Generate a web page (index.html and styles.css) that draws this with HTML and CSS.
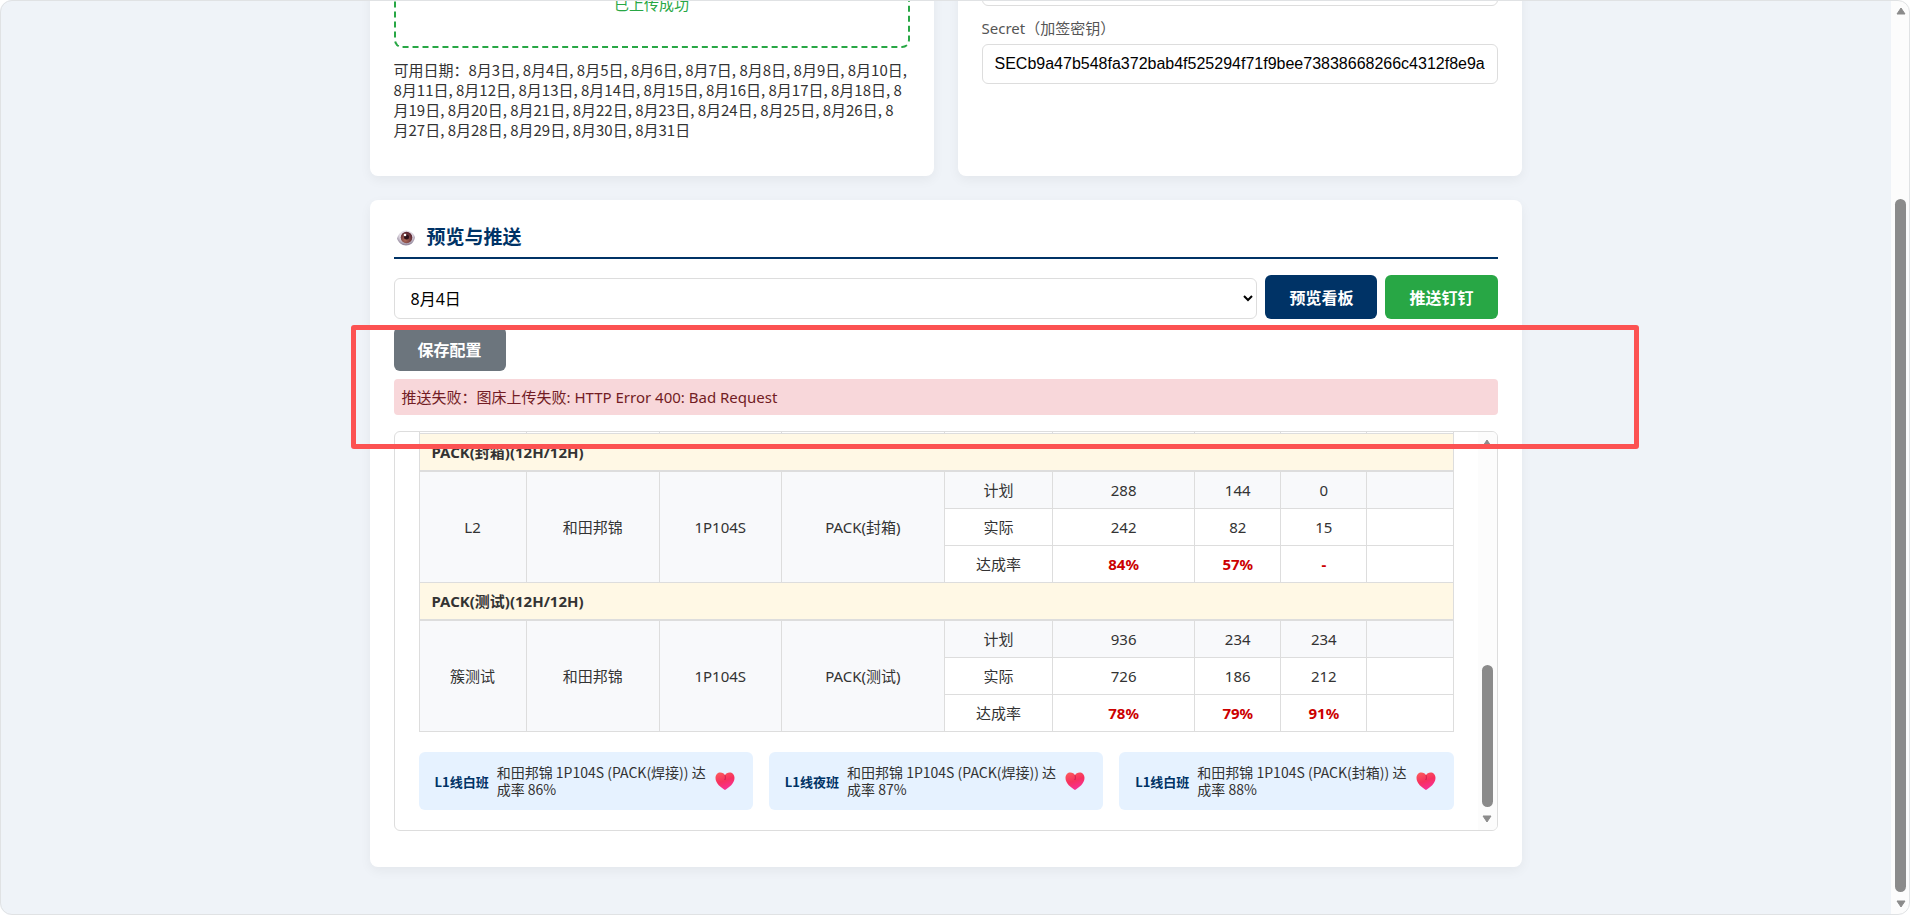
FILE: index.html
```html
<!DOCTYPE html>
<html lang="zh-CN">
<head>
  <meta charset="UTF-8" />
  <meta name="viewport" content="width=device-width, initial-scale=1.0"/>
  <title>生产看板推送</title>
  <link rel="stylesheet" href="styles.css">
</head>
<body>
<div class="window">
  <main class="page">
    <div class="container">
      <div class="config">
        <section class="card">
          <h2>上传数据</h2>
          <div class="upload">
            <div class="upload-icon"></div>
            <div>已上传成功</div>
          </div>
          <p class="dates">可用日期：8月3日, 8月4日, 8月5日, 8月6日, 8月7日, 8月8日, 8月9日, 8月10日, 8月11日, 8月12日, 8月13日, 8月14日, 8月15日, 8月16日, 8月17日, 8月18日, 8<br>月19日, 8月20日, 8月21日, 8月22日, 8月23日, 8月24日, 8月25日, 8月26日, 8<br>月27日, 8月28日, 8月29日, 8月30日, 8月31日</p>
        </section>
        <section class="card">
          <h2>钉钉配置</h2>
          <div class="field">
            <label for="webhook">Webhook</label>
            <input type="text" id="webhook">
          </div>
          <div class="field">
            <label for="secret">Secret（加签密钥）</label>
            <input type="text" id="secret" value="SECb9a47b548fa372bab4f525294f71f9bee73838668266c4312f8e9a">
          </div>
        </section>
      </div>

      <section class="card push">
        <h2>
          <svg class="eye" viewBox="0 0 23 18" aria-hidden="true">
            <defs>
              <radialGradient id="white" cx="0.5" cy="0.35" r="0.6">
                <stop offset="0" stop-color="#ffffff"/>
                <stop offset="0.6" stop-color="#ddd6e0"/>
                <stop offset="1" stop-color="#94889c"/>
              </radialGradient>
              <radialGradient id="iris" cx="0.4" cy="0.7" r="0.65">
                <stop offset="0" stop-color="#b06c58"/>
                <stop offset="1" stop-color="#5c2733"/>
              </radialGradient>
            </defs>
            <path d="M3 9.500C4.500 4.500 8 1.500 12 1.500S20 4.500 21 8.500C20 13.500 16.500 16.500 12 16.500S4.500 13.500 3 9.500Z" fill="url(#white)"/>
            <circle cx="12.500" cy="8.500" r="5.800" fill="url(#iris)"/>
            <circle cx="12.500" cy="8" r="2.500" fill="#2c0f18"/>
            <circle cx="11" cy="6" r="1.300" fill="#fff"/>
          </svg>
          预览与推送
        </h2>
        <div class="toolbar">
          <select aria-label="日期">
            <option>8月4日</option>
          </select>
          <button class="btn">预览看板</button>
          <button class="btn green">推送钉钉</button>
        </div>
        <button class="btn gray">保存配置</button>
        <div class="status">推送失败：图床上传失败: HTTP Error 400: Bad Request</div>

        <div class="preview">
          <div class="preview-body">
            <table>
              <colgroup>
                <col class="c-line"><col class="c-customer"><col class="c-model"><col class="c-process"><col class="c-kind"><col class="c-total"><col class="c-shift"><col class="c-shift"><col class="c-shift">
              </colgroup>
              <tr><td></td><td></td><td></td><td></td><td></td><td></td><td></td><td></td><td></td></tr>
              <tr class="group"><td colspan="9">PACK(封箱)(12H/12H)</td></tr>
              <tr class="plan">
                <td rowspan="3">L2</td><td rowspan="3">和田邦锦</td><td rowspan="3">1P104S</td><td rowspan="3">PACK(封箱)</td>
                <td>计划</td><td>288</td><td>144</td><td>0</td><td></td>
              </tr>
              <tr><td>实际</td><td>242</td><td>82</td><td>15</td><td></td></tr>
              <tr><td>达成率</td><td class="rate">84%</td><td class="rate">57%</td><td class="rate">-</td><td></td></tr>
              <tr class="group"><td colspan="9">PACK(测试)(12H/12H)</td></tr>
              <tr class="plan">
                <td rowspan="3">簇测试</td><td rowspan="3">和田邦锦</td><td rowspan="3">1P104S</td><td rowspan="3">PACK(测试)</td>
                <td>计划</td><td>936</td><td>234</td><td>234</td><td></td>
              </tr>
              <tr><td>实际</td><td>726</td><td>186</td><td>212</td><td></td></tr>
              <tr><td>达成率</td><td class="rate">78%</td><td class="rate">79%</td><td class="rate">91%</td><td></td></tr>
            </table>
            <div class="honors">
              <div class="honor">
                <strong>L1线白班</strong>
                <span>和田邦锦 1P104S (PACK(焊接)) 达<br>成率 86%</span>
                <svg class="heart" viewBox="0 0 20 18" aria-hidden="true">
                  <defs>
                    <linearGradient id="pink" x1="0.2" y1="0" x2="0.6" y2="1">
                      <stop offset="0" stop-color="#fb5a5c"/>
                      <stop offset="0.5" stop-color="#f7305f"/>
                      <stop offset="1" stop-color="#f82f9c"/>
                    </linearGradient>
                  </defs>
                  <path d="M10 18C6 15.500 0.500 11.500 0.500 6C0.500 2.500 2.800 0.500 5.300 0.500C7.500 0.500 9.200 1.600 10 3.200C10.800 1.600 12.500 0.500 14.700 0.500C17.200 0.500 19.500 2.500 19.500 6C19.500 11.500 14 15.500 10 18Z" fill="url(#pink)"/>
                  <path d="M10 3.200C10.600 5 10.500 6.500 9.800 8" fill="none" stroke="#c81d4e"/>
                </svg>
              </div>
              <div class="honor">
                <strong>L1线夜班</strong>
                <span>和田邦锦 1P104S (PACK(焊接)) 达<br>成率 87%</span>
                <svg class="heart" viewBox="0 0 20 18" aria-hidden="true">
                  <path d="M10 18C6 15.500 0.500 11.500 0.500 6C0.500 2.500 2.800 0.500 5.300 0.500C7.500 0.500 9.200 1.600 10 3.200C10.800 1.600 12.500 0.500 14.700 0.500C17.200 0.500 19.500 2.500 19.500 6C19.500 11.500 14 15.500 10 18Z" fill="url(#pink)"/>
                  <path d="M10 3.200C10.600 5 10.500 6.500 9.800 8" fill="none" stroke="#c81d4e"/>
                </svg>
              </div>
              <div class="honor">
                <strong>L1线白班</strong>
                <span>和田邦锦 1P104S (PACK(封箱)) 达<br>成率 88%</span>
                <svg class="heart" viewBox="0 0 20 18" aria-hidden="true">
                  <path d="M10 18C6 15.500 0.500 11.500 0.500 6C0.500 2.500 2.800 0.500 5.300 0.500C7.500 0.500 9.200 1.600 10 3.200C10.800 1.600 12.500 0.500 14.700 0.500C17.200 0.500 19.500 2.500 19.500 6C19.500 11.500 14 15.500 10 18Z" fill="url(#pink)"/>
                  <path d="M10 3.200C10.600 5 10.500 6.500 9.800 8" fill="none" stroke="#c81d4e"/>
                </svg>
              </div>
            </div>
          </div>
          <div class="scrollbar">
            <svg class="arrow" viewBox="0 0 10 8" aria-hidden="true"><path d="M5 1L9 7H1Z"/></svg>
            <div class="track"><div class="thumb" style="height: 40.400%"></div></div>
            <svg class="arrow" viewBox="0 0 10 8" aria-hidden="true"><path d="M5 7L1 1H9Z"/></svg>
          </div>
        </div>
        <div class="marker"></div>
      </section>
    </div>
  </main>
  <div class="scrollbar">
    <svg class="arrow" viewBox="0 0 10 8" aria-hidden="true"><path d="M5 1L9 7H1Z"/></svg>
    <div class="track"><div class="thumb" style="height: 79.700%"></div></div>
    <svg class="arrow" viewBox="0 0 10 8" aria-hidden="true"><path d="M5 7L1 1H9Z"/></svg>
  </div>
</div>
<div class="frame"></div>
</body>
</html>
```

FILE: styles.css
```css
* { box-sizing: border-box; }
body { margin: 0; background: #eff3f8; color: #333; font-family: "Noto Sans", "Noto Sans CJK SC", sans-serif; font-size: 15px; line-height: 20px; }

.window { display: flex; height: 100vh; overflow: hidden; }
.page { flex: 1; display: flex; flex-direction: column; justify-content: flex-end; }
.container { width: 100%; max-width: 1200px; margin: 0 auto; padding: 0 24px 48px; }
.frame { position: fixed; inset: 0; border: 1px solid #e0e2e4; border-radius: 12px; box-shadow: 0 0 0 12px #fff; pointer-events: none; }

.config { display: grid; grid-template-columns: 1fr 1fr; gap: 24px; margin-bottom: 24px; }
.card { background: #fff; border-radius: 8px; padding: 24px; box-shadow: 0 4px 12px rgba(0,0,0,0.05); min-width: 0; }
.push { position: relative; padding-bottom: 36px; }
h2 { display: flex; align-items: center; gap: 10px; margin: 0 0 16px; padding-bottom: 6px; border-bottom: 2px solid #003366; color: #003366; font-size: 19px; line-height: 27px; }
.eye { width: 23px; height: 18px; }

.upload { border: 2px dashed #28a745; border-radius: 8px; padding: 28px 30px 32px; text-align: center; color: #28a745; }
.upload-icon { height: 24px; }
.dates { margin: 12px 0; font-family: "Noto Sans CJK SC", sans-serif; }

.field { margin-bottom: 12px; }
label { display: block; margin-bottom: 6px; color: #555; }
input { display: block; width: 100%; height: 40px; padding: 10px 12px; border: 1px solid #ddd; border-radius: 6px; font-family: "Liberation Sans", Arial, sans-serif; font-size: 16px; color: #000; }

.toolbar { display: flex; align-items: flex-end; gap: 8px; margin-bottom: 8px; }
select { flex: 1; height: 41px; padding: 8px 12px; border: 1px solid #ddd; border-radius: 6px; background: #fff; color: #000; font-family: inherit; font-size: 16px; }
.btn { padding: 13px 24px 11px; border: none; border-radius: 6px; background: #003366; color: #fff; font-family: inherit; font-size: 16px; font-weight: 600; line-height: 20px; cursor: pointer; }
.green { background: #28a745; }
.gray { display: block; background: #6c757d; }
.status { margin: 8px 0 16px; padding: 8px; border-radius: 4px; background: #f8d7da; color: #721c24; }

.preview { display: flex; height: 400px; border: 1px solid #ddd; border-radius: 6px; overflow: hidden; }
.preview-body { flex: 1; display: flex; flex-direction: column; justify-content: flex-end; padding: 20px 24px; min-width: 0; }
table { width: 100%; table-layout: fixed; border-collapse: collapse; }
td { height: 37px; padding: 8px 12px; border: 1px solid #ddd; text-align: center; }
.c-line { width: 107px; }
.c-customer { width: 133px; }
.c-model { width: 122px; }
.c-process { width: 163px; }
.c-kind { width: 108px; }
.c-total { width: 142px; }
.c-shift { width: 86px; }
.group td { background: #fff8e5; border-bottom: 2px solid #ddd; text-align: left; font-weight: bold; }
.plan td { background: #f8f9fb; }
.rate { color: #cc0000; font-weight: bold; }

.honors { display: grid; grid-template-columns: repeat(3, 1fr); gap: 16px; margin-top: 20px; }
.honor { display: flex; align-items: center; gap: 8px; padding: 12px 16px; border-radius: 6px; background: #e6f2ff; font-family: "Noto Sans CJK SC", sans-serif; font-size: 14px; line-height: 17px; min-width: 0; }
.honor strong { color: #003366; font-size: 13px; white-space: nowrap; }
.honor span { flex: 1; min-width: 0; white-space: nowrap; }
.heart { flex: none; width: 24px; height: 18px; }

.scrollbar { flex: none; display: flex; flex-direction: column; align-items: center; width: 19px; padding: 7px 0; background: #fcfcfc; }
.arrow { width: 10px; height: 8px; fill: #8b8b8b; stroke: #8b8b8b; stroke-linejoin: round; }
.track { flex: 1; display: flex; flex-direction: column; justify-content: flex-end; margin: 8px 0; }
.thumb { width: 11px; border-radius: 6px; background: #8b8b8b; }

/* red highlight box over the result row */
.marker { position: absolute; top: 125px; left: -19px; right: -117px; height: 124px; border: 5px solid #fc5252; border-radius: 3px; pointer-events: none; }
```
